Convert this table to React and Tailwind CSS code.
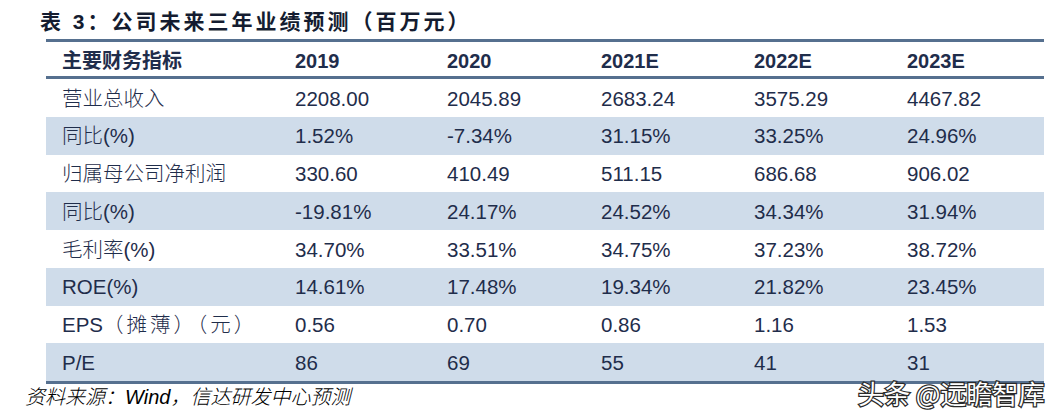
import React from 'react';

const rows = [
  { label: '营业总收入', values: ['2208.00', '2045.89', '2683.24', '3575.29', '4467.82'] },
  { label: '同比(%)', values: ['1.52%', '-7.34%', '31.15%', '33.25%', '24.96%'] },
  { label: '归属母公司净利润', values: ['330.60', '410.49', '511.15', '686.68', '906.02'] },
  { label: '同比(%)', values: ['-19.81%', '24.17%', '24.52%', '34.34%', '31.94%'] },
  { label: '毛利率(%)', values: ['34.70%', '33.51%', '34.75%', '37.23%', '38.72%'] },
  { label: 'ROE(%)', values: ['14.61%', '17.48%', '19.34%', '21.82%', '23.45%'] },
  {
    label: (
      <>
        EPS<span className="tracking-[3px]">（摊薄）（元）</span>
      </>
    ),
    values: ['0.56', '0.70', '0.86', '1.16', '1.53'],
  },
  { label: 'P/E', values: ['86', '69', '55', '41', '31'] },
];

const years = ['2019', '2020', '2021E', '2022E', '2023E'];

const grid = 'grid grid-cols-[233px_152px_154px_153px_153px_153px] items-center';

export default function App() {
  return (
    <div className="relative w-[1063px] h-[418px] overflow-hidden bg-white text-[#1f2d4b] font-['Liberation_Sans','Noto_Sans_CJK_SC',sans-serif]">
      {/* title */}
      <div className="h-[39px] pt-[7px] pl-[40px] text-[21px] leading-[30px] font-bold tracking-[3px] text-[#141c30]">
        表 3：公司未来三年业绩预测（百万元）
      </div>

      {/* table */}
      <div className="ml-[46px] w-[998px] border-y-[3px] border-[#56708f]">
        <div className={`${grid} h-[37px] border-b-[3px] border-[#56708f] text-[20px] font-bold`}>
          <div className="pl-[16px] pt-[3px]">主要财务指标</div>
          {years.map((y) => (
            <div key={y} className="pl-[16px] pt-[3px]">{y}</div>
          ))}
        </div>
        {rows.map((row, i) => (
          <div
            key={i}
            className={`${grid} h-[37.75px] text-[20.5px] ${i % 2 === 1 ? 'bg-[#cfdcea]' : 'bg-white'}`}
          >
            <div className="pl-[16px] pt-[2px] font-light">{row.label}</div>
            {row.values.map((v, j) => (
              <div key={j} className="pl-[16px] pt-[2px]">{v}</div>
            ))}
          </div>
        ))}
      </div>

      {/* source */}
      <div className="pl-[25px] text-[20px] leading-[26px] italic font-light text-black">
        资料来源：Wind，信达研发中心预测
      </div>

      {/* watermark */}
      <div className="absolute left-[858px] top-[377px] text-[26px] leading-[32px] text-white font-['Noto_Sans_CJK_SC',sans-serif] [-webkit-text-stroke:2.5px_#2a2a2a] [paint-order:stroke_fill]">
        头条 @远瞻智库
      </div>
    </div>
  );
}
